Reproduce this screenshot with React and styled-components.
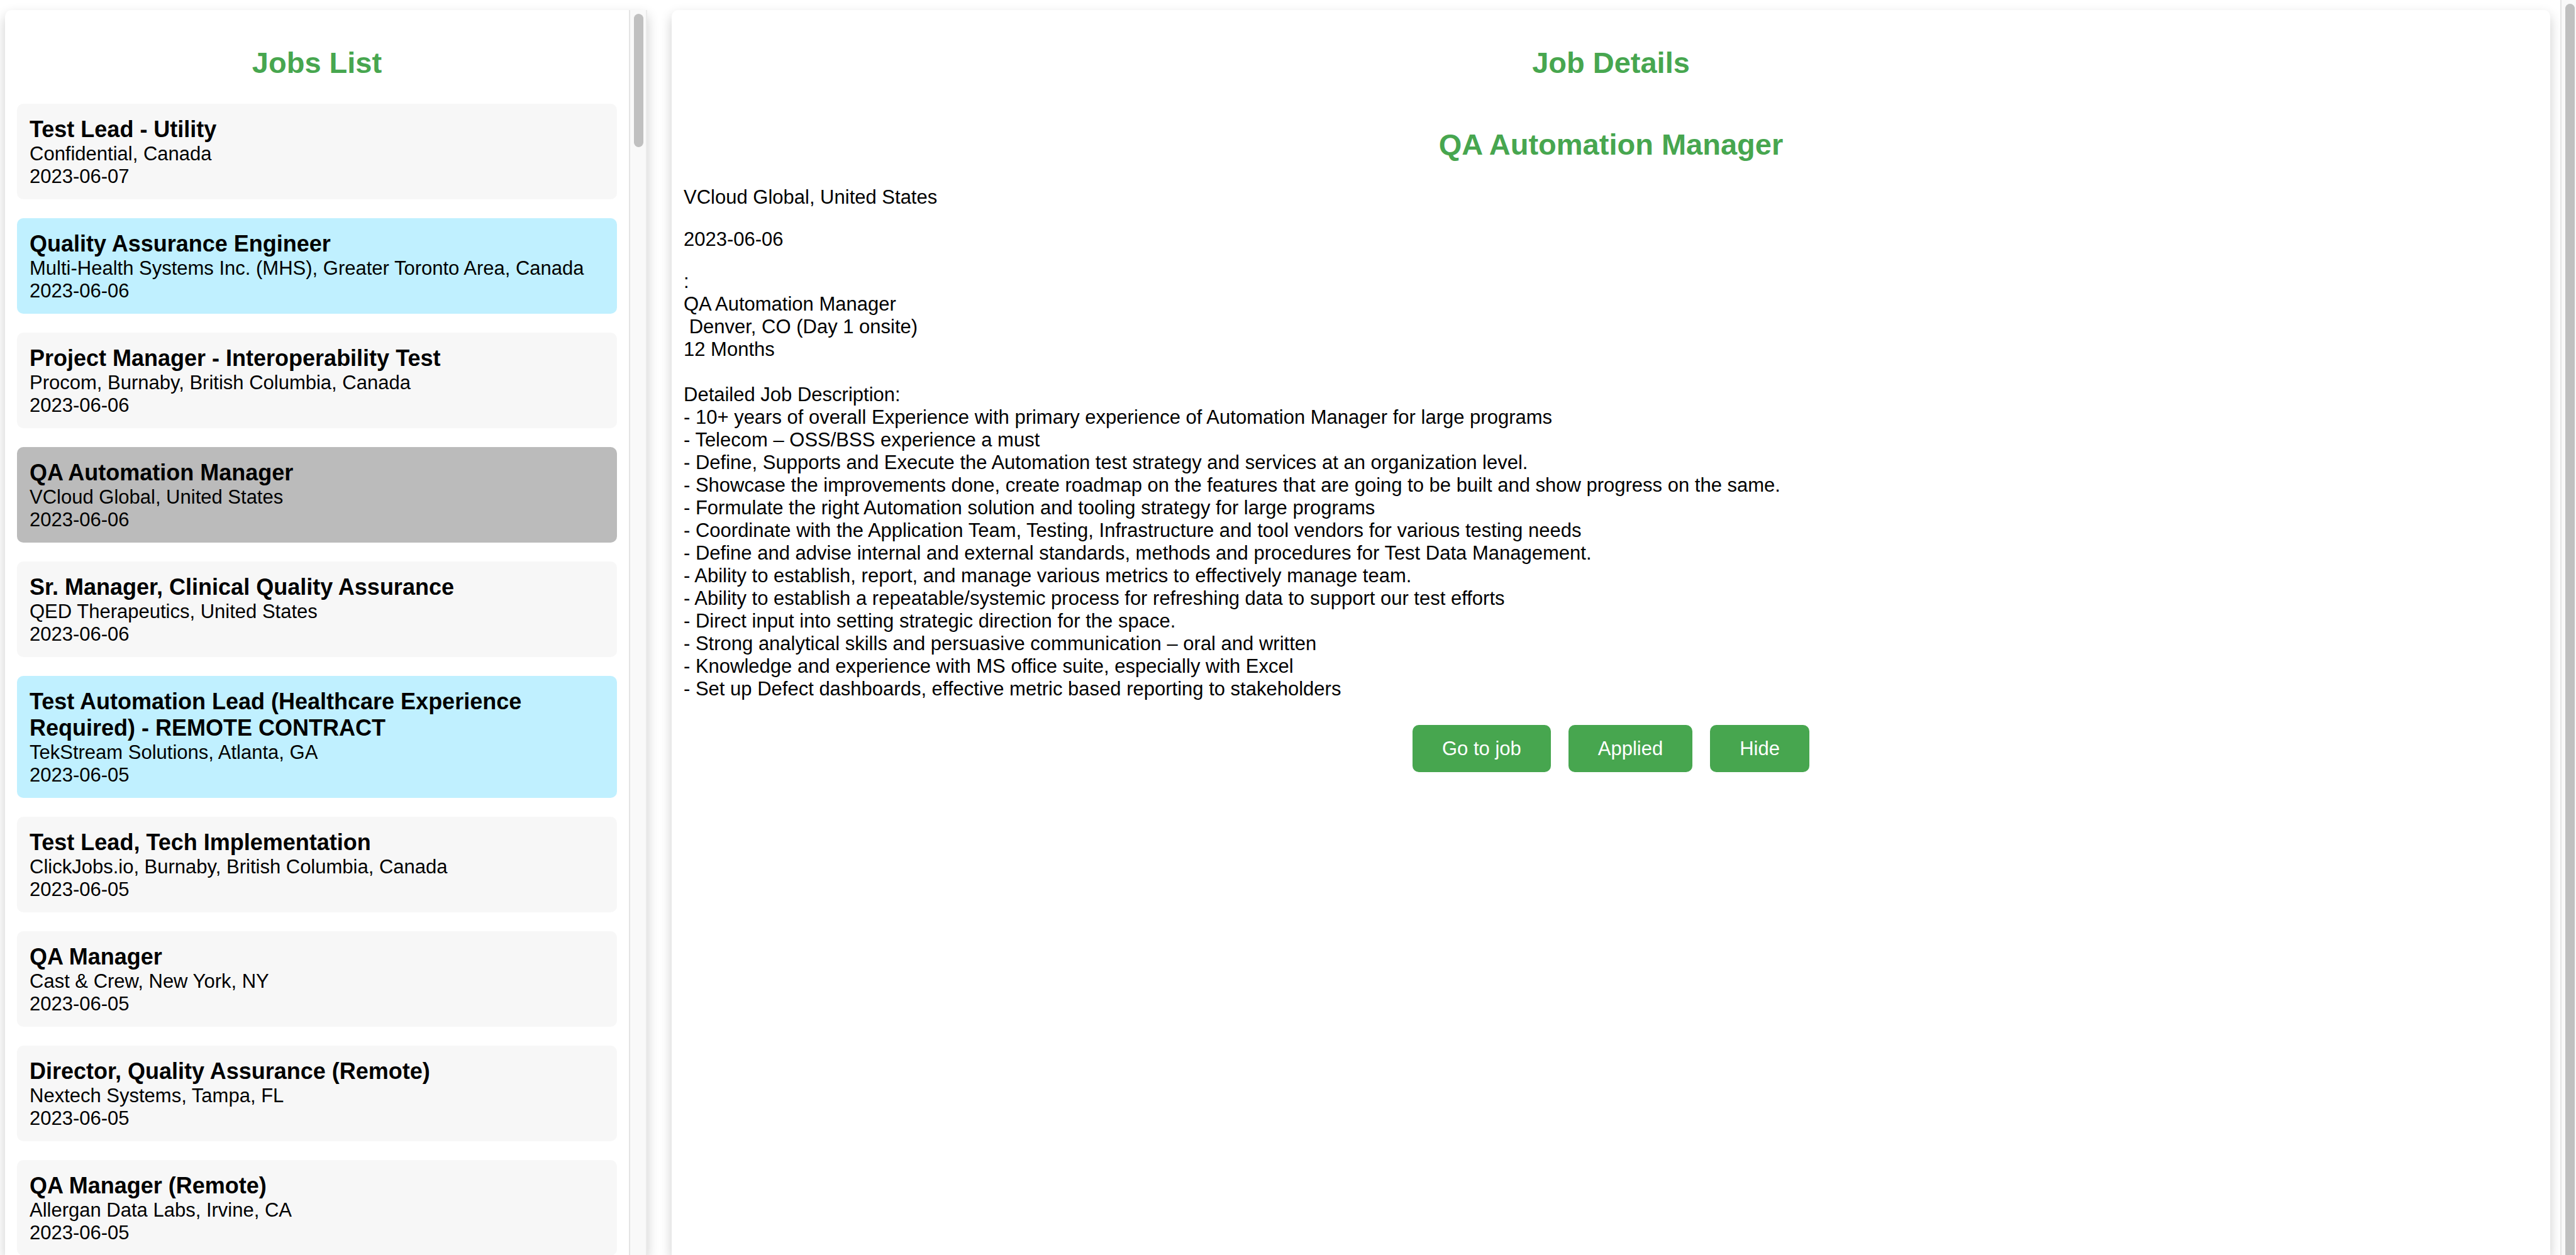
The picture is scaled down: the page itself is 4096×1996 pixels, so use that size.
import React from "react";
import styled, { createGlobalStyle } from "styled-components";

const GlobalStyle = createGlobalStyle`
  *, *::before, *::after { box-sizing: border-box; }
  body {
    margin: 0;
    background: #fff;
    color: #000;
    font-family: "Liberation Sans", Arial, Helvetica, sans-serif;
    font-size: 31px;
    line-height: 36px;
    text-rendering: optimizeLegibility;
  }
`;

const Page = styled.div`
  display: flex;
  height: 100vh;
  overflow: hidden;
`;

const Columns = styled.main`
  flex: 1;
  min-width: 0;
  display: flex;
  gap: 39px;
  padding: 16px 16px 0 8px;
`;

const Panel = styled.section`
  display: flex;
  min-width: 0;
  background: #fff;
  border-radius: 10px 10px 0 0;
  box-shadow: 0 8px 19px rgba(0, 0, 0, 0.2);
`;

const JobsPanel = styled(Panel)`
  flex: none;
  width: calc(25vw - 3px);
  border-top-right-radius: 0;
`;

const DetailsPanel = styled(Panel)`
  flex: 1;
`;

const PanelBody = styled.div`
  flex: 1;
  min-width: 0;
  padding: 0 19px;
  overflow-y: auto;
  scrollbar-width: none;
`;

const Heading = styled.h2`
  margin: 0;
  padding: ${(p) => (p.$first ? "57px 0 38px" : "38px 0 39px")};
  color: #47a64f;
  font-size: 47px;
  line-height: 54px;
  text-align: center;
`;

const JobList = styled.ul`
  display: flex;
  flex-direction: column;
  gap: 30px;
  margin: 0;
  padding: 0 0 30px;
  list-style: none;
`;

const cardColors = { plain: "#f7f7f7", applied: "#c0f0ff", selected: "#bbbbbb" };

const JobCard = styled.li`
  padding: 20px 20px 18px;
  border-radius: 10px;
  background: ${(p) => cardColors[p.$state]};
  cursor: pointer;
`;

const JobTitle = styled.h3`
  margin: 0;
  font-size: 36px;
  line-height: 42px;
`;

const JobMeta = styled.div``;

const Paragraph = styled.p`
  margin: 0 0 31px;
  white-space: pre-wrap;
`;

const Actions = styled.div`
  display: flex;
  justify-content: center;
  gap: 28px;
  padding: 8px 0;
`;

const ActionButton = styled.button`
  padding: 20px 47px;
  border: 0;
  border-radius: 10px;
  background: #47a64f;
  color: #fff;
  font: inherit;
  line-height: 35px;
  cursor: pointer;
`;

const Rail = styled.div`
  flex: none;
  overflow: hidden;
  padding: 6px ${(p) => (p.$inner ? "4px" : "2px")} 0 6px;
  border-left: 2px solid #e4e4e4;
  border-right: ${(p) => (p.$inner ? "2px solid #ebebeb" : "0")};
  background: #f9f9f9;
`;

const Thumb = styled.div`
  width: 15px;
  height: ${(p) => p.$length};
  border-radius: 8px;
  background: #c0c0c0;
`;

const jobs = [
  ["Test Lead - Utility", "Confidential, Canada", "2023-06-07", "plain"],
  ["Quality Assurance Engineer", "Multi-Health Systems Inc. (MHS), Greater Toronto Area, Canada", "2023-06-06", "applied"],
  ["Project Manager - Interoperability Test", "Procom, Burnaby, British Columbia, Canada", "2023-06-06", "plain"],
  ["QA Automation Manager", "VCloud Global, United States", "2023-06-06", "selected"],
  ["Sr. Manager, Clinical Quality Assurance", "QED Therapeutics, United States", "2023-06-06", "plain"],
  ["Test Automation Lead (Healthcare Experience Required) - REMOTE CONTRACT", "TekStream Solutions, Atlanta, GA", "2023-06-05", "applied"],
  ["Test Lead, Tech Implementation", "ClickJobs.io, Burnaby, British Columbia, Canada", "2023-06-05", "plain"],
  ["QA Manager", "Cast & Crew, New York, NY", "2023-06-05", "plain"],
  ["Director, Quality Assurance (Remote)", "Nextech Systems, Tampa, FL", "2023-06-05", "plain"],
  ["QA Manager (Remote)", "Allergan Data Labs, Irvine, CA", "2023-06-05", "plain"],
];

const description = `:
QA Automation Manager
 Denver, CO (Day 1 onsite)
12 Months

Detailed Job Description:
- 10+ years of overall Experience with primary experience of Automation Manager for large programs
- Telecom – OSS/BSS experience a must
- Define, Supports and Execute the Automation test strategy and services at an organization level.
- Showcase the improvements done, create roadmap on the features that are going to be built and show progress on the same.
- Formulate the right Automation solution and tooling strategy for large programs
- Coordinate with the Application Team, Testing, Infrastructure and tool vendors for various testing needs
- Define and advise internal and external standards, methods and procedures for Test Data Management.
- Ability to establish, report, and manage various metrics to effectively manage team.
- Ability to establish a repeatable/systemic process for refreshing data to support our test efforts
- Direct input into setting strategic direction for the space.
- Strong analytical skills and persuasive communication – oral and written
- Knowledge and experience with MS office suite, especially with Excel
- Set up Defect dashboards, effective metric based reporting to stakeholders`;

export default function App() {
  return (
    <>
      <GlobalStyle />
      <Page>
        <Columns>
          <JobsPanel>
            <PanelBody>
              <Heading $first>Jobs List</Heading>
              <JobList>
                {jobs.map(([title, company, date, state]) => (
                  <JobCard key={title} $state={state}>
                    <JobTitle>{title}</JobTitle>
                    <JobMeta>{company}</JobMeta>
                    <JobMeta>{date}</JobMeta>
                  </JobCard>
                ))}
              </JobList>
            </PanelBody>
            <Rail $inner aria-hidden="true">
              <Thumb $length="212px" />
            </Rail>
          </JobsPanel>
          <DetailsPanel>
            <PanelBody>
              <Heading $first>Job Details</Heading>
              <Heading>QA Automation Manager</Heading>
              <Paragraph>VCloud Global, United States</Paragraph>
              <Paragraph>2023-06-06</Paragraph>
              <Paragraph>{description}</Paragraph>
              <Actions>
                <ActionButton type="button">Go to job</ActionButton>
                <ActionButton type="button">Applied</ActionButton>
                <ActionButton type="button">Hide</ActionButton>
              </Actions>
            </PanelBody>
          </DetailsPanel>
        </Columns>
        <Rail aria-hidden="true">
          <Thumb $length="100vh" />
        </Rail>
      </Page>
    </>
  );
}
